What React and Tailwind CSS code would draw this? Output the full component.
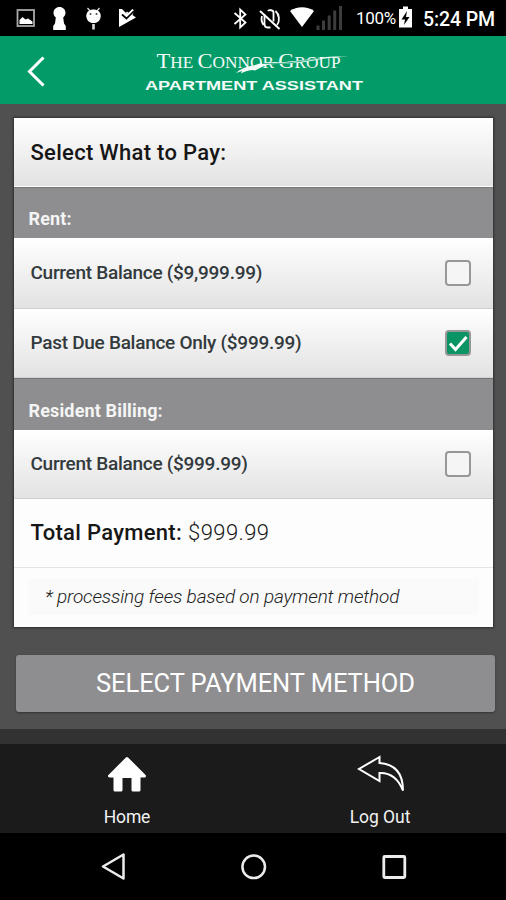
import React from 'react';
import clsx from 'clsx';

const RENT_ITEMS = [
  { label: 'Current Balance ($9,999.99)', checked: false, height: 'h-[71px]' },
  { label: 'Past Due Balance Only ($999.99)', checked: true, height: 'h-[69px]' },
];

const BILLING_ITEMS = [
  { label: 'Current Balance ($999.99)', checked: false, height: 'h-[69px]' },
];

const StatusBar = () => (
  <div className="flex h-9 shrink-0 items-center bg-black pl-4 pr-[10px] text-white">
    <svg width="126" height="36" viewBox="0 0 126 36" fill="none">
      <rect x="1.5" y="10" width="16.5" height="16" stroke="#a8a8a8" strokeWidth="1.8" />
      <path d="M3.5 24v-4l3-3 3 2.500 2.500-1 4.500 3V24z" fill="#fff" />
      <path
        d="M43.500 7c3.400 0 6 2.600 6 5.800 0 2-1 3.600-2.300 4.600l.8 6 1.800 2.500V30H37.200v-4.100l1.800-2.500.8-6c-1.400-1-2.300-2.600-2.300-4.600 0-3.200 2.600-5.800 6-5.800z"
        fill="#fff"
      />
      <path d="m71.500 8 3 3.500M83.500 8l-3 3.500" stroke="#ddd" strokeWidth="1.300" />
      <path d="M77.500 9.500c4 0 7.200 2.400 7.200 6.200 0 4-2.500 7.300-7.200 7.300s-7.200-3.300-7.200-7.300c0-3.800 3.200-6.200 7.200-6.200z" fill="#fff" />
      <path d="M77.500 24v5.500" stroke="#ddd" strokeWidth="2.600" />
      <circle cx="74.500" cy="14" r="1" fill="#444" />
      <circle cx="80.500" cy="14" r="1" fill="#444" />
      <path d="M103 9h3l3.500 3.500L112 14l4-4.500 2 1-1.500 4.500 3.500 2.500-17 9.500z" fill="#fff" />
      <path d="m106 14.500 4.500 4L118 11" stroke="#000" strokeWidth="1.700" />
      <path d="m110.500 12 2 1.800 4.500-4.300" stroke="#fff" strokeWidth="1.500" />
    </svg>
    <div className="flex-1" />
    <svg className="shrink-0" width="116" height="36" viewBox="230 0 116 36" fill="none">
      <path d="m234.500 13 11 9.500-5.300 5V9.500l5.300 5-11 9.500" stroke="#fff" strokeWidth="1.800" />
      <path
        d="M264.500 14.500v9.500c0 2 1 3.500 3 3.500h3M268 11c1-1.500 5.500-1 5.500 1.500v9M275.500 11c4 3.500 4.500 10 1.500 14M262 16c-1 3-.5 6 1.500 9"
        stroke="#fff"
        strokeWidth="1.800"
      />
      <path d="m260 11 19.500 18" stroke="#fff" strokeWidth="2" />
      <path d="M290 11c6.500-5 17.500-5 24 0l-12 16z" fill="#fff" />
      <path
        d="M316.500 25.500h3V30h-3zM322 20.500h3V30h-3zM327.700 15.500h3V30h-3zM333.200 10.500h3V30h-3zM339 6h3v24h-3z"
        fill="#3c3c3c"
      />
    </svg>
    <span className="ml-[10px] w-[41px] pt-[2px] text-[17px] tracking-[-0.300px]">100%</span>
    <svg className="ml-[1px] shrink-0" width="15" height="36" viewBox="0 0 15 36">
      <path d="M1 9h4V6.500h5V9h4v18.500H1z" fill="#fff" />
      <path d="m9 11-5.500 8.500H7L6 25l5.500-8H8z" fill="#000" />
    </svg>
    <span className="ml-[10px] w-[73px] whitespace-nowrap pt-[3px] text-[19.500px] font-medium tracking-[-0.100px]">
      5:24 PM
    </span>
  </div>
);

const Logo = () => (
  <svg width="226" height="52" viewBox="141 46 226 52" fill="#f4fbf8">
    <text x="156.500" y="69.500" fontFamily="Liberation Serif, serif" fontSize="21.500" textLength="184" lengthAdjust="spacingAndGlyphs">
      T<tspan fontSize="16.500">HE </tspan>C<tspan fontSize="16.500">ONNOR </tspan>G<tspan fontSize="16.500">ROUP</tspan>
    </text>
    {/* brush stroke running through the name */}
    <path
      d="M236 75c4-4 10-6.500 17-7.500 3-1 6-1.500 10-2.500l12-1c5 .5 10 0 15-.5 16-1 30-5 45-5 5 0 9 .2 13 .5-14 0-24 1.500-34 3.500-12 2.500-26 3-38 3.500-5 .3-10 1-13 2.500l-8 4-3-.5c-4 .3-8 2-11 3.500l1-2.500-6 2z"
    />
    <path d="M262 65.500c20 .8 38-1.500 58-5.500" fill="none" stroke="#039c68" strokeWidth=".8" />
    <text
      x="145"
      y="92"
      fontFamily="Liberation Sans, sans-serif"
      fontWeight="700"
      fontSize="13.500"
      textLength="218"
      lengthAdjust="spacingAndGlyphs"
    >
      APARTMENT ASSISTANT
    </text>
  </svg>
);

const Header = () => (
  <div className="flex h-[68px] shrink-0 items-center bg-[#039c68]">
    <svg className="ml-6 shrink-0" width="24" height="68" viewBox="24 36 24 68" fill="none">
      <path d="M43.500 57.500 29.500 71.500l14 14" stroke="#fff" strokeWidth="3" />
    </svg>
    <div className="ml-[93px]">
      <Logo />
    </div>
  </div>
);

const SectionTitle = ({ children, className }) => (
  <div
    className={clsx(
      'flex items-center border-t border-[#777] bg-[#8e8e90] pl-[14.500px] pt-[11px] text-[18px] font-bold tracking-[0.150px] text-[#f5f5f5]',
      className,
    )}
  >
    {children}
  </div>
);

const Checkbox = ({ checked }) => (
  <span
    className={clsx(
      'flex h-[26px] w-[26px] items-center justify-center rounded-[4px] border-2 border-[#979797]',
      checked ? 'bg-[#0b9564]' : 'bg-[#f5f5f5]',
    )}
  >
    {checked && (
      <svg className="shrink-0" width="22" height="22" viewBox="0 0 22 22" fill="none">
        <path d="m3 11.500 5.500 6L19.500 5" stroke="#fff" strokeWidth="3" />
      </svg>
    )}
  </span>
);

const PayRow = ({ item }) => (
  <div
    className={clsx(
      'flex items-center justify-between border-b border-[#cfcfcf] bg-linear-to-b from-white to-[#e2e2e2] pl-[16.500px] pr-[22px]',
      item.height,
    )}
  >
    <span className="text-[19px] font-medium tracking-[-0.280px] text-[#333a3d]">{item.label}</span>
    <Checkbox checked={item.checked} />
  </div>
);

const PaymentCard = () => (
  <div className="ml-[14px] mt-[14px] mr-[13px] flex h-[509px] flex-col bg-[#fdfdfd] shadow-[0_0_2px_1px_#303030]">
    <div className="flex h-[69px] items-center border-b border-white bg-linear-to-b from-white to-[#e2e2e2] pl-[16.500px] text-[22px] font-medium tracking-[0.300px] text-[#161616]">
      Select What to Pay:
    </div>
    <SectionTitle className="h-[51px]">Rent:</SectionTitle>
    {RENT_ITEMS.map((item) => (
      <PayRow key={item.label} item={item} />
    ))}
    <SectionTitle className="h-[52px]">Resident Billing:</SectionTitle>
    {BILLING_ITEMS.map((item) => (
      <PayRow key={item.label} item={item} />
    ))}
    <div className="flex h-[69px] items-center border-b border-[#e4e4e4] pl-[16.500px] pb-[2px] text-[22px] text-[#161616]">
      <span className="font-medium tracking-[0.300px]">Total Payment:</span>
      <span className="ml-[6px] font-light tracking-[0.400px]">$999.99</span>
    </div>
    <div className="mx-[14px] mt-[11px] flex h-9 items-center bg-[#fafafa] pl-[17px] text-[19px] font-light italic tracking-[-0.170px] text-[#222]">
      * processing fees based on payment method
    </div>
  </div>
);

const TabBar = () => (
  <div className="flex h-[89px] shrink-0 bg-[#1b1b1b] text-[17.500px] text-[#f2f2f2]">
    <div className="flex w-[254px] flex-col items-center pt-[10px]">
      <svg width="42" height="40" viewBox="106 754 42 40" fill="#fff">
        <path
          d="M127 758.500 109.500 776h5.500v14h6v-13.500h12V790h6v-14h5.500z"
          stroke="#fff"
          strokeWidth="3"
          strokeLinejoin="round"
        />
      </svg>
      <span className="mt-[10px] tracking-[-0.150px]">Home</span>
    </div>
    <div className="flex w-[252px] flex-col items-center pt-[10px]">
      <svg width="50" height="40" viewBox="355 754 50 40" fill="none">
        <path
          d="M379.500 757 359 769l20.500 12v-8c10-.5 18 4 23.500 17.500 0-18-9-26.500-23.500-27.500z"
          stroke="#fff"
          strokeWidth="2"
        />
      </svg>
      <span className="mt-[10px] tracking-[-0.050px]">Log Out</span>
    </div>
  </div>
);

const NavBar = () => (
  <div className="flex h-[67px] shrink-0 items-start justify-between bg-black pl-[100px] pr-[98px] pt-[20px]">
    <svg width="28" height="28" viewBox="0 0 28 28" fill="none" stroke="#ececec" strokeWidth="2.500">
      <path d="M23.500 1.500v24L3 13.500z" strokeLinejoin="round" />
    </svg>
    <svg width="28" height="28" viewBox="0 0 28 28" fill="none" stroke="#ececec" strokeWidth="2.500">
      <circle cx="13.700" cy="13.800" r="11.300" />
    </svg>
    <svg width="28" height="28" viewBox="0 0 28 28" fill="none" stroke="#ececec" strokeWidth="2.800">
      <rect x="3.800" y="3.500" width="21" height="21" rx="1" />
    </svg>
  </div>
);

const App = () => (
  <div className="flex h-[900px] w-[506px] flex-col overflow-hidden bg-[#505050] font-['Roboto',sans-serif]">
    <StatusBar />
    <Header />
    <div className="flex h-[625px] shrink-0 flex-col">
      <PaymentCard />
      <button className="ml-[16px] mr-[11px] mt-[28px] h-[57px] rounded-[3px] bg-[#8e8e90] text-[25.500px] tracking-[-0.080px] text-white shadow-[0_1px_2px_#333]">
        SELECT PAYMENT METHOD
      </button>
    </div>
    <div className="h-[15px] shrink-0 bg-[#323232]" />
    <TabBar />
    <NavBar />
  </div>
);

export default App;
